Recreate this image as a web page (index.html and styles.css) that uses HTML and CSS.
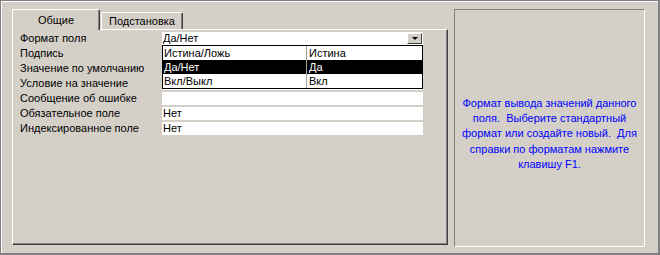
FILE: index.html
```html
<!DOCTYPE html>
<html lang="ru">
<head>
    <meta charset="UTF-8">
    <title>Свойства поля</title>
    <link rel="stylesheet" href="styles.css">
</head>
<body>
    <div class="window">
        <div class="left">
            <div class="tabs">
                <div class="tab active">Общие</div>
                <div class="tab">Подстановка</div>
            </div>
            <div class="panel">
                <div class="row">
                    <div class="label">Формат поля</div>
                    <div class="value combo">
                        <span>Да/Нет</span>
                        <div class="drop-btn"><span class="arrow"></span></div>
                    </div>
                    <div class="list">
                        <div class="item"><span class="col1">Истина/Ложь</span><span class="col2">Истина</span></div>
                        <div class="item selected"><span class="col1">Да/Нет</span><span class="col2">Да</span></div>
                        <div class="item"><span class="col1">Вкл/Выкл</span><span class="col2">Вкл</span></div>
                    </div>
                </div>
                <div class="row"><div class="label">Подпись</div><div class="value"></div></div>
                <div class="row"><div class="label">Значение по умолчанию</div><div class="value"></div></div>
                <div class="row"><div class="label">Условие на значение</div><div class="value"></div></div>
                <div class="row"><div class="label">Сообщение об ошибке</div><div class="value"></div></div>
                <div class="row"><div class="label">Обязательное поле</div><div class="value">Нет</div></div>
                <div class="row"><div class="label">Индексированное поле</div><div class="value">Нет</div></div>
            </div>
        </div>
        <div class="help">
            <p>Формат вывода значений данного<br>поля.&nbsp; Выберите стандартный<br>формат или создайте новый.&nbsp; Для<br>справки по форматам нажмите<br>клавишу F1.</p>
        </div>
    </div>
</body>
</html>
```

FILE: styles.css
```css
body {
    margin: 0;
    background: #d4d0c8;
    font-family: "Liberation Sans", Arial, sans-serif;
    font-size: 11px;
    color: #000;
}
.window {
    box-sizing: border-box;
    width: 660px;
    height: 255px;
    display: flex;
    align-items: flex-start;
    gap: 6px;
    padding: 8px 13px 0 11px;
    background: #d4d0c8;
    border-top: 1px solid #808080;
    border-left: 1px solid #808080;
    border-right: 2px solid #808080;
    border-bottom: 2px solid #808080;
    box-shadow: inset 1px 1px 0 #fff;
}
.left {
    width: 436px;
}
.tabs {
    display: flex;
    align-items: flex-end;
    height: 20px;
    position: relative;
    z-index: 1;
}
.tab {
    box-sizing: border-box;
    height: 17px;
    padding: 1px 7px 0 7px;
    border-top: 1px solid #fff;
    border-left: 1px solid #fff;
    border-right: 1px solid #404040;
    border-radius: 2px 2px 0 0;
    box-shadow: inset -1px 0 0 #808080;
    background: #d4d0c8;
    line-height: 14px;
    margin-left: 1px;
}
.tab.active {
    width: 88px;
    height: 21px;
    margin: 0 0 -1px 0;
    padding-top: 3px;
    text-align: center;
}
.panel {
    box-sizing: border-box;
    height: 216px;
    padding: 1px 0 0 7px;
    border-top: 1px solid #fff;
    border-left: 1px solid #fff;
    border-right: 1px solid #404040;
    border-bottom: 1px solid #404040;
    box-shadow: inset -1px -1px 0 #808080;
    position: relative;
}
.row {
    display: flex;
    align-items: center;
    height: 15px;
    position: relative;
}
.label {
    width: 142px;
    line-height: 13px;
}
.value {
    box-sizing: border-box;
    width: 261px;
    height: 13px;
    background: #fff;
    line-height: 13px;
    padding-left: 1px;
}
.combo {
    display: flex;
    justify-content: space-between;
    align-items: center;
}
.drop-btn {
    box-sizing: border-box;
    width: 15px;
    height: 11px;
    margin-right: 1px;
    background: #d4d0c8;
    border-top: 1px solid #fff;
    border-left: 1px solid #fff;
    border-right: 1px solid #404040;
    border-bottom: 1px solid #404040;
    display: flex;
    align-items: center;
    justify-content: center;
}
.arrow {
    width: 0;
    height: 0;
    border-left: 3px solid transparent;
    border-right: 3px solid transparent;
    border-top: 3px solid #000;
}
.list {
    position: absolute;
    left: 142px;
    top: 14px;
    width: 261px;
    box-sizing: border-box;
    border: 1px solid #000;
    background: #fff;
    z-index: 2;
}
.item {
    display: flex;
    height: 14px;
    line-height: 14px;
}
.item.selected {
    background: #000;
    color: #fff;
}
.col1 {
    width: 142px;
    padding-left: 1px;
    border-right: 1px solid #a0a0a0;
}
.col2 {
    padding-left: 2px;
}
.help {
    box-sizing: border-box;
    width: 191px;
    height: 238px;
    border-top: 1px solid #808080;
    border-left: 1px solid #808080;
    border-right: 1px solid #fff;
    border-bottom: 1px solid #fff;
    display: flex;
    align-items: center;
    justify-content: center;
    padding-top: 12px;
}
.help p {
    margin: 0;
    color: #0000ff;
    text-align: center;
    line-height: 15.3px;
}
```
